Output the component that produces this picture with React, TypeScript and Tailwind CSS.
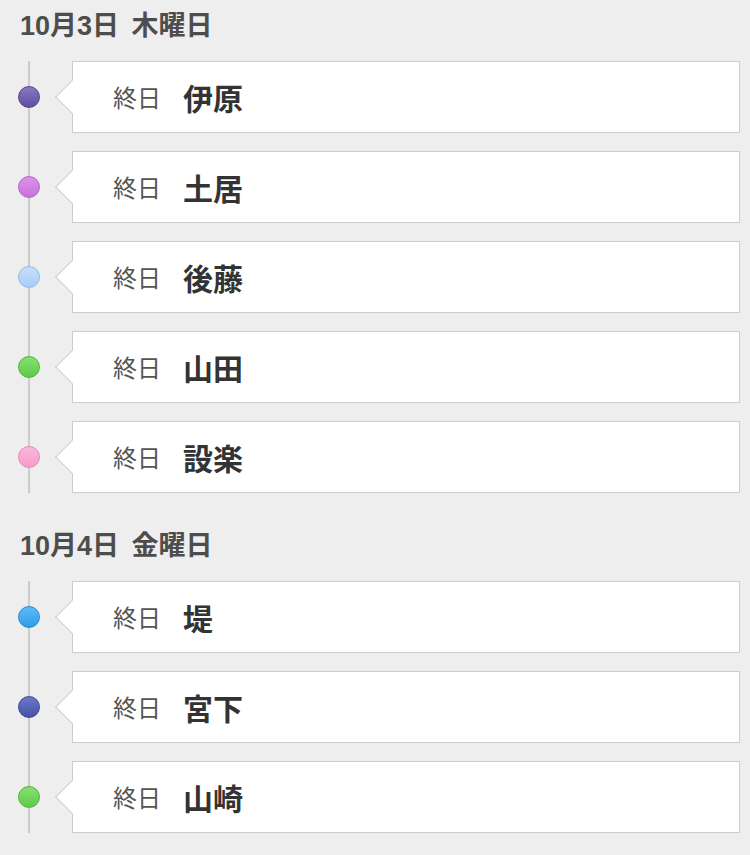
const days = [
  {
    title: "10月3日 木曜日",
    items: [
      { name: "伊原", dot: "from-[#8a78c4] to-[#5f4da0] border-[#56468f]" },
      { name: "土居", dot: "from-[#dc92ec] to-[#c672d8] border-[#b866c8]" },
      { name: "後藤", dot: "from-[#c4e0fc] to-[#a9cdf6] border-[#94b9e4]" },
      { name: "山田", dot: "from-[#86e06e] to-[#5ccb48] border-[#52b440]" },
      { name: "設楽", dot: "from-[#fbb8dc] to-[#f69ccb] border-[#e08ab6]" },
    ],
  },
  {
    title: "10月4日 金曜日",
    items: [
      { name: "堤", dot: "from-[#5cbcf8] to-[#2c9ce8] border-[#2a8cd0]" },
      { name: "宮下", dot: "from-[#6b78c8] to-[#4652a8] border-[#3e4896]" },
      { name: "山崎", dot: "from-[#86e06e] to-[#5ccb48] border-[#52b440]" },
    ],
  },
];

function EventRow({ name, dot }: { name: string; dot: string }) {
  return (
    <div className="flex items-center">
      <div className="w-[72px] shrink-0">
        <div
          className={`relative ml-[18px] h-[22px] w-[22px] rounded-full border bg-linear-to-b ${dot}`}
        />
      </div>
      <div className="relative mr-[10px] flex h-[72px] flex-1 items-center border border-[#cccccc] bg-white pl-[40px]">
        <div className="absolute -left-[13px] top-[23px] h-[24px] w-[24px] rotate-45 border-b border-l border-[#cccccc] bg-white" />
        <span className="relative text-[24px] text-[#555555]">終日</span>
        <span className="relative ml-[22px] text-[30px] font-bold text-[#333333]">
          {name}
        </span>
      </div>
    </div>
  );
}

export default function App() {
  return (
    <div
      className="min-h-screen bg-[#eeeeee] pb-[20px] pt-[11px]"
      style={{ fontFamily: '"Noto Sans CJK JP", "Noto Sans", sans-serif' }}
    >
      {days.map((day, i) => (
        <section key={day.title} className={i > 0 ? "mt-[38px]" : ""}>
          <h2 className="pl-[20px] font-['Liberation_Sans','Noto_Sans_CJK_JP',sans-serif] text-[27px] font-bold leading-[30px] text-[#4d4d4d] [word-spacing:5px]">
            {day.title}
          </h2>
          <div className="relative mt-[20px]">
            <div className="absolute bottom-0 left-[28px] top-0 w-[2px] bg-[#cccccc]" />
            <div className="flex flex-col gap-[18px]">
              {day.items.map((item) => (
                <EventRow key={item.name} name={item.name} dot={item.dot} />
              ))}
            </div>
          </div>
        </section>
      ))}
    </div>
  );
}
